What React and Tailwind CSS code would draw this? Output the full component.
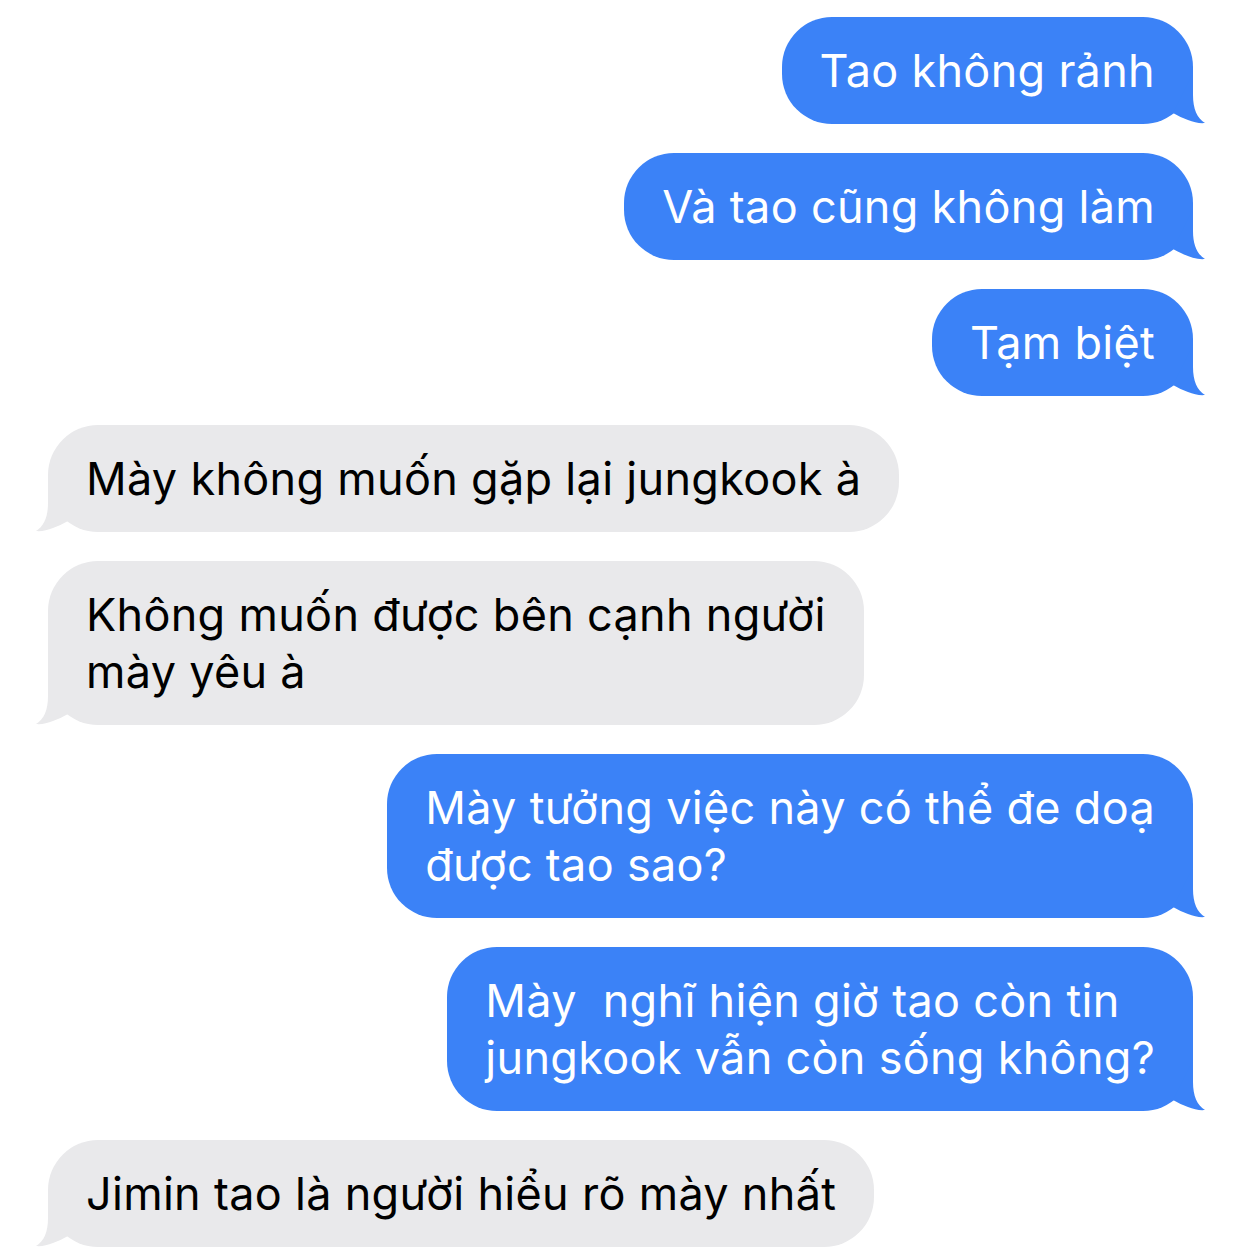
import React from 'react';

const messages = [
  { me: true, lines: ['Tao không rảnh'] },
  { me: true, lines: ['Và tao cũng không làm'] },
  { me: true, lines: ['Tạm biệt'] },
  { me: false, lines: ['Mày không muốn gặp lại jungkook à'] },
  { me: false, lines: ['Không muốn được bên cạnh người', 'mày yêu à'] },
  { me: true, lines: ['Mày tưởng việc này có thể đe doạ', 'được tao sao?'] },
  { me: true, lines: ['Mày  nghĩ hiện giờ tao còn tin', 'jungkook vẫn còn sống không?'] },
  { me: false, lines: ['Jimin tao là người hiểu rõ mày nhất'] },
];

function Tail({ me }) {
  const fill = me ? '#3b82f7' : '#e9e9eb';
  if (me) {
    return (
      <svg width="44" height="51" viewBox="0 0 44 51" className="absolute bottom-0 right-[-14px]">
        <path d="M30 0 V22 C30 36 34 45 42 50 C32 51 21 46 10 40 L30 0 Z" fill={fill} />
      </svg>
    );
  }
  return (
    <svg width="44" height="51" viewBox="0 0 44 51" className="absolute bottom-0 left-[-14px]">
      <path d="M14 0 V22 C14 36 10 45 2 50 C12 51 23 46 34 40 L14 0 Z" fill={fill} />
    </svg>
  );
}

function Bubble({ me, lines }) {
  return (
    <div className={`flex ${me ? 'justify-end' : 'justify-start'}`}>
      <div
        className={`relative rounded-[50px] px-[38px] py-[25px] text-[45px] leading-[57px] tracking-[0.3px] whitespace-pre ${
          me ? 'bg-[#3b82f7] text-white' : 'bg-[#e9e9eb] text-black'
        }`}
      >
        <Tail me={me} />
        <div className="relative">
          {lines.map((l, i) => (
            <div key={i}>{l}</div>
          ))}
        </div>
      </div>
    </div>
  );
}

export default function App() {
  return (
    <div
      className="w-[1242px] h-[1255px] bg-white overflow-hidden pt-[17px] pl-[48px] pr-[49px] flex flex-col gap-[29px]"
      style={{ fontFamily: 'Inter, "Noto Sans", sans-serif' }}
    >
      {messages.map((m, i) => (
        <Bubble key={i} {...m} />
      ))}
    </div>
  );
}
